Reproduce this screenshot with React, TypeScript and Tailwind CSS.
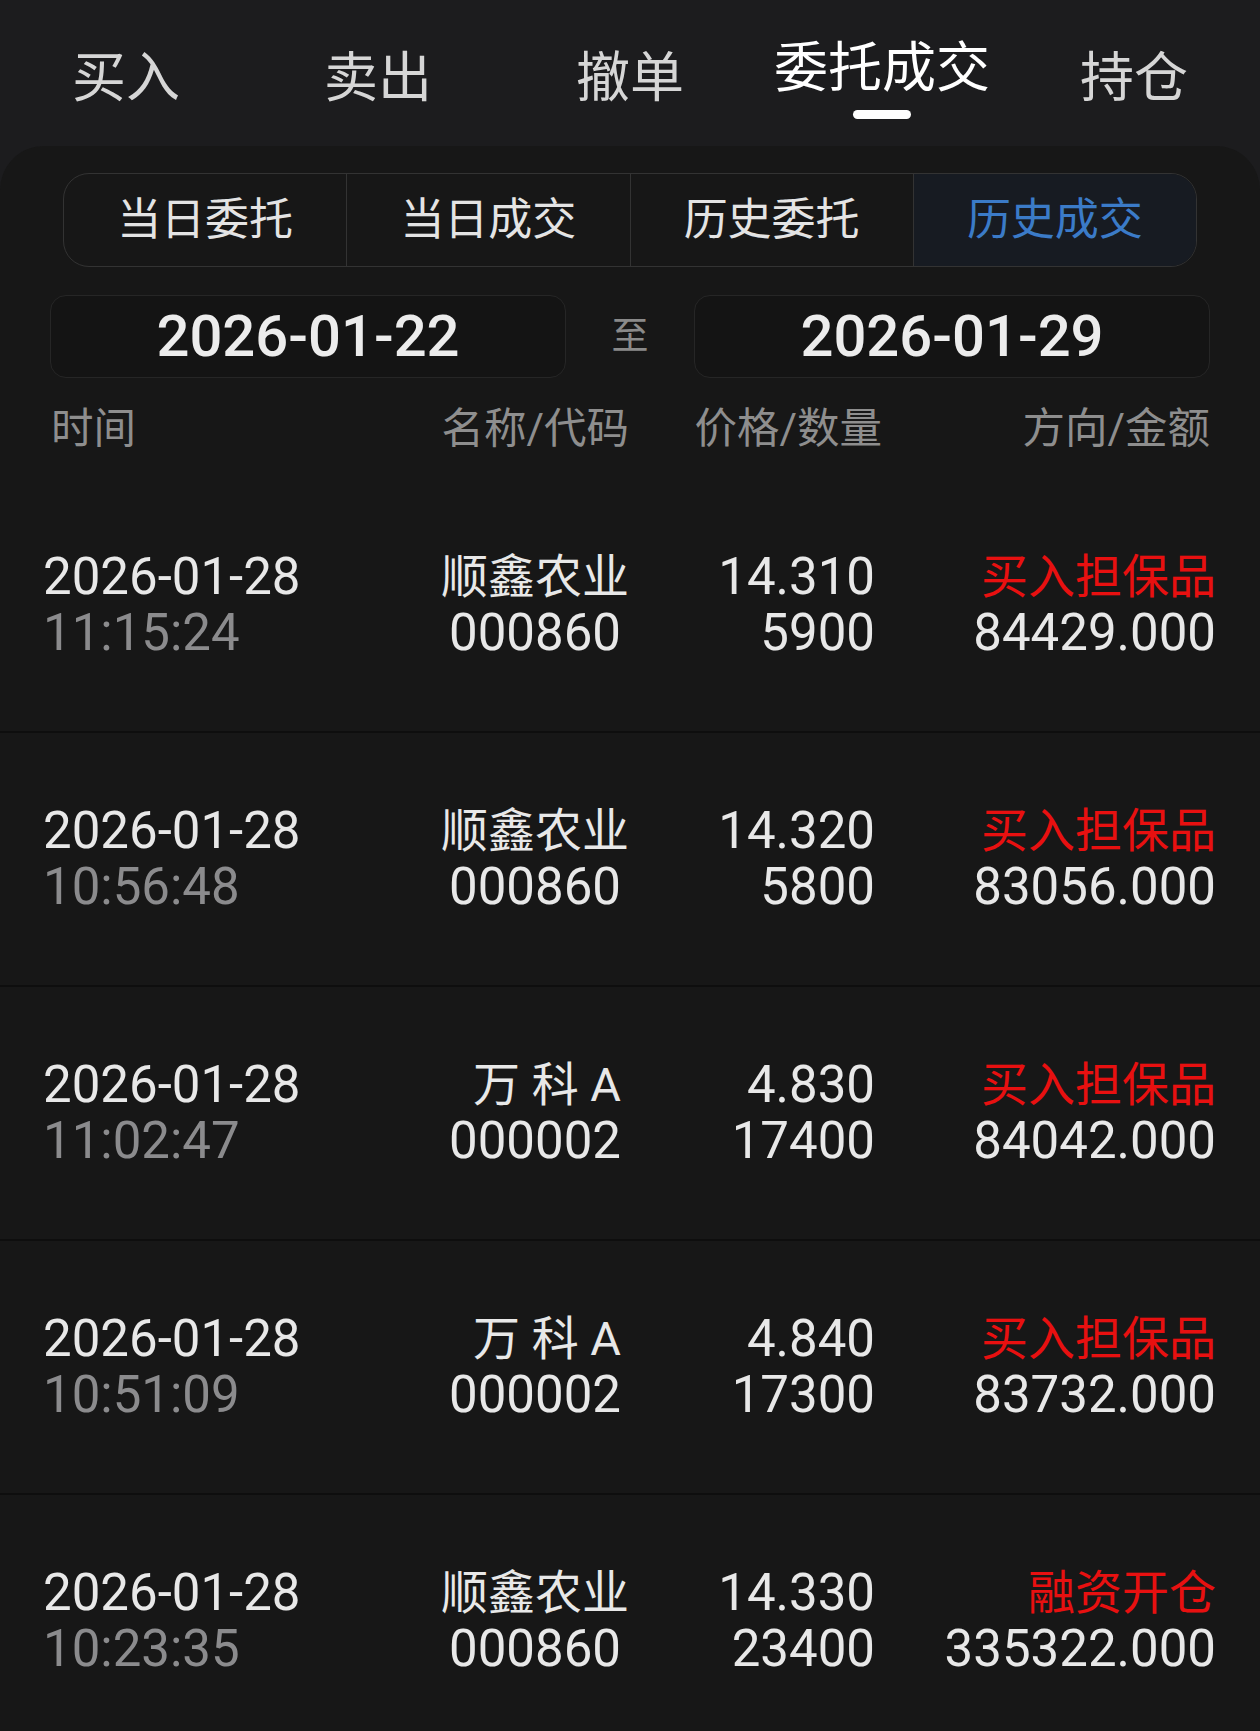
const topTabs = ['买入', '卖出', '撤单', '委托成交', '持仓']
const segments = ['当日委托', '当日成交', '历史委托', '历史成交']

const trades = [
  { date: '2026-01-28', time: '11:15:24', name: '顺鑫农业', code: '000860', price: '14.310', qty: '5900', side: '买入担保品', amount: '84429.000' },
  { date: '2026-01-28', time: '10:56:48', name: '顺鑫农业', code: '000860', price: '14.320', qty: '5800', side: '买入担保品', amount: '83056.000' },
  { date: '2026-01-28', time: '11:02:47', name: '万 科 A', code: '000002', price: '4.830', qty: '17400', side: '买入担保品', amount: '84042.000' },
  { date: '2026-01-28', time: '10:51:09', name: '万 科 A', code: '000002', price: '4.840', qty: '17300', side: '买入担保品', amount: '83732.000' },
  { date: '2026-01-28', time: '10:23:35', name: '顺鑫农业', code: '000860', price: '14.330', qty: '23400', side: '融资开仓', amount: '335322.000' },
]

const font = "font-['Roboto','Noto_Sans_CJK_SC',sans-serif]"

export default function App() {
  const activeTab = 3
  const activeSeg = 3

  return (
    <div className={`w-[1260px] h-[1731px] overflow-hidden bg-[#1c1c1e] ${font}`}>
      {/* top tabs */}
      <div className="grid grid-cols-5 h-[146px]">
        {topTabs.map((t, i) =>
          i === activeTab ? (
            <div key={t} className="flex flex-col items-center pt-[39px]">
              <span className="text-[54px] leading-[60px] text-white">{t}</span>
              <div className="mt-[11px] w-[58px] h-[9px] rounded-full bg-white" />
            </div>
          ) : (
            <div key={t} className="flex justify-center pt-[49px]">
              <span className="text-[54px] leading-[60px] text-[#d6d6d6]">{t}</span>
            </div>
          )
        )}
      </div>

      {/* panel */}
      <div className="bg-[#171717] rounded-t-[44px] h-[1585px]">
        <div className="pt-[27px] px-[63px]">
          <div className="flex h-[94px] border border-[#333] rounded-[26px] overflow-hidden">
            {segments.map((s, i) => (
              <div
                key={s}
                className={`flex-1 flex items-center justify-center text-[44px] ${i > 0 ? 'border-l border-[#333]' : ''} ${
                  i === activeSeg ? 'bg-[#171b22] text-[#3b7bc8]' : 'text-[#e4e4e4]'
                }`}
              >
                {s}
              </div>
            ))}
          </div>
        </div>

        {/* date range */}
        <div className="flex items-center px-[50px] mt-[28px]">
          <div className="w-[516px] h-[83px] flex items-center justify-center rounded-[16px] border border-[#262626] bg-[#141414] text-[58px] font-medium text-[#ececec]">
            2026-01-22
          </div>
          <div className="flex-1 text-center text-[37px] text-[#8a8a8a]">至</div>
          <div className="w-[516px] h-[83px] flex items-center justify-center rounded-[16px] border border-[#262626] bg-[#141414] text-[58px] font-medium text-[#ececec]">
            2026-01-29
          </div>
        </div>

        {/* header */}
        <div className="grid grid-cols-[578px_253px_328px] pl-[51px] h-[101px] items-center text-[42.5px] text-[#8e8e8e]">
          <div className="flex justify-between">
            <span>时间</span>
            <span>名称/代码</span>
          </div>
          <div className="text-right">价格/数量</div>
          <div className="text-right">方向/金额</div>
        </div>

        {/* rows */}
        {trades.map((r, i) => (
          <div key={i} className={`${i > 0 ? 'border-t-2 border-[#0e0e0e]' : ''} h-[252px] box-content`}>
            <div className="h-full grid grid-cols-[338px_248px_246px_341px] pl-[43px] items-center leading-[56px] text-[#e8e8e8]">
              <div>
                <div className="text-[51px]">{r.date}</div>
                <div className="text-[51px] text-[#8b8b8d]">{r.time}</div>
              </div>
              <div className="text-right">
                <div className={`text-[47px] ${r.name.endsWith('A') ? 'pr-[8px]' : ''}`}>{r.name}</div>
                <div className="text-[51px] pr-[8px]">{r.code}</div>
              </div>
              <div className="text-right">
                <div className="text-[51px]">{r.price}</div>
                <div className="text-[51px]">{r.qty}</div>
              </div>
              <div className="text-right">
                <div className="text-[47px] text-[#e81010]">{r.side}</div>
                <div className="text-[51px]">{r.amount}</div>
              </div>
            </div>
          </div>
        ))}
      </div>
    </div>
  )
}
